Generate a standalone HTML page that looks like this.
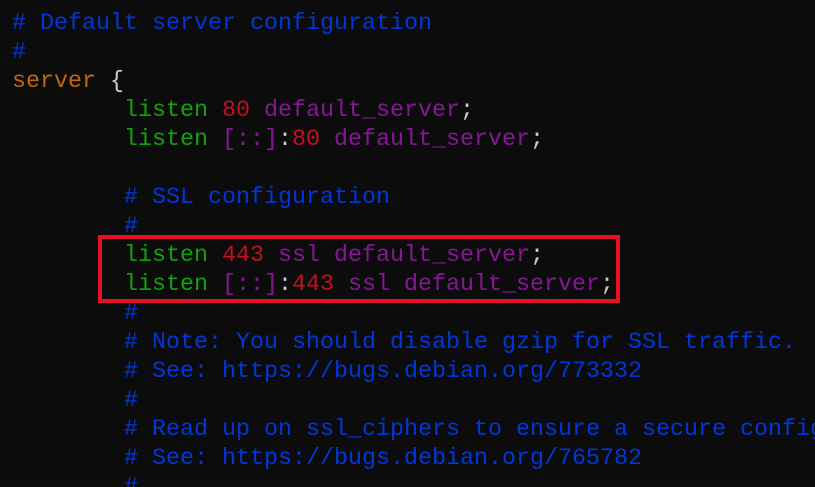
<!DOCTYPE html>
<html><head><style>
html,body{margin:0;padding:0;background:#0c0c0c;width:815px;height:487px;overflow:hidden;position:relative}
pre{margin:0;position:absolute;left:12px;top:10px;width:803px;height:477px;overflow:hidden;font-family:"Liberation Mono",monospace;font-size:23.33px;line-height:29px;color:#cccccc;white-space:pre}
.b{color:#0037da}.g{color:#13a10e}.r{color:#c50f1f}.p{color:#881798}.o{color:#c0680a}
.box{position:absolute;left:98px;top:235px;width:514px;height:60px;border:4px solid #e81123}
</style></head><body>
<pre><span class="b"># Default server configuration</span>
<span class="b">#</span>
<span class="o">server</span> {
        <span class="g">listen</span> <span class="r">80</span> <span class="p">default_server</span>;
        <span class="g">listen</span> <span class="p">[::]</span>:<span class="r">80</span> <span class="p">default_server</span>;

        <span class="b"># SSL configuration</span>
        <span class="b">#</span>
        <span class="g">listen</span> <span class="r">443</span> <span class="p">ssl default_server</span>;
        <span class="g">listen</span> <span class="p">[::]</span>:<span class="r">443</span> <span class="p">ssl default_server</span>;
        <span class="b">#</span>
        <span class="b"># Note: You should disable gzip for SSL traffic.</span>
        <span class="b"># See: https://bugs.debian.org/773332</span>
        <span class="b">#</span>
        <span class="b"># Read up on ssl_ciphers to ensure a secure config</span>
        <span class="b"># See: https://bugs.debian.org/765782</span>
        <span class="b">#</span></pre>
<div class="box"></div>
</body></html>
